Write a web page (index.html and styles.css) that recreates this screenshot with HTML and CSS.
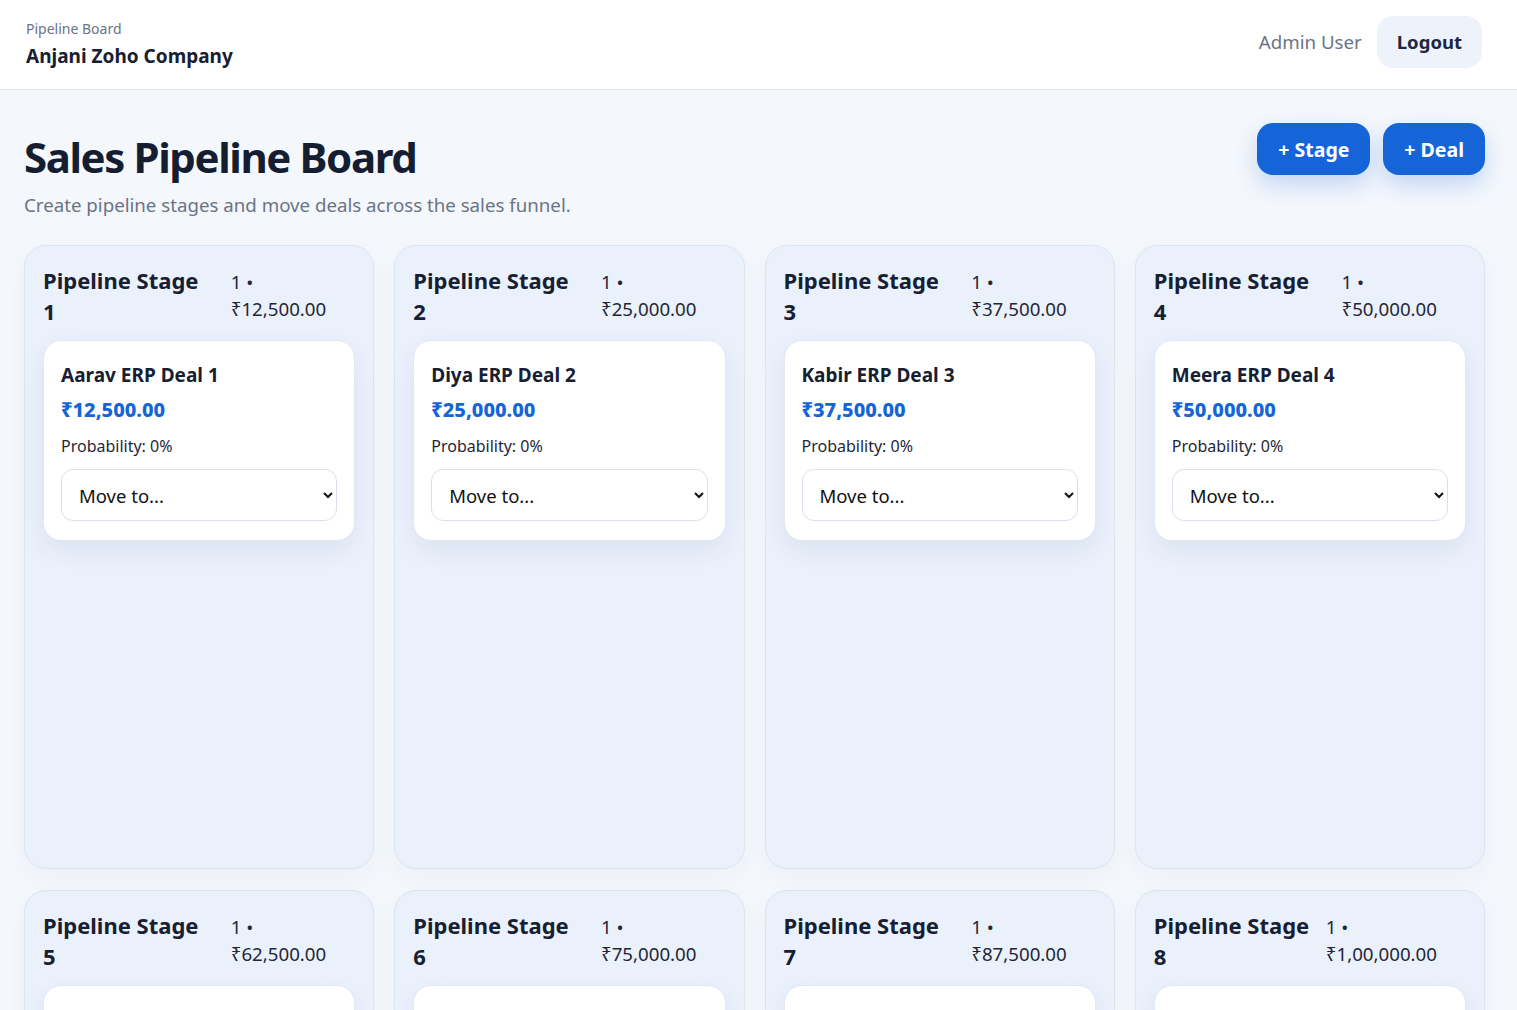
FILE: index.html
```html
<!DOCTYPE html>
<html lang="en">
<head>
    <title>Sales Pipeline Board</title>
    <link rel="stylesheet" href="styles.css">
</head>
<body>
    <!-- Top bar with company and user -->
    <header class="topbar">
        <div class="brand">
            <div class="brand-label">Pipeline Board</div>
            <div class="brand-name">Anjani Zoho Company</div>
        </div>
        <div class="user-area">
            <span class="user-name">Admin User</span>
            <button class="logout-button">Logout</button>
        </div>
    </header>

    <main class="page">
        <!-- Page heading and actions -->
        <div class="page-head">
            <div class="page-title">
                <h1>Sales Pipeline Board</h1>
                <p>Create pipeline stages and move deals across the sales funnel.</p>
            </div>
            <div class="actions">
                <button class="primary-button">+ Stage</button>
                <button class="primary-button">+ Deal</button>
            </div>
        </div>

        <!-- Stage columns -->
        <div class="board">
            <section class="stage">
                <div class="stage-head">
                    <h2>Pipeline Stage 1</h2>
                    <div class="stage-meta">1 • ₹12,500.00</div>
                </div>
                <div class="deal">
                    <h3>Aarav ERP Deal 1</h3>
                    <div class="deal-amount">₹12,500.00</div>
                    <div class="deal-prob">Probability: 0%</div>
                    <select class="move-select"><option>Move to...</option></select>
                </div>
            </section>
            <section class="stage">
                <div class="stage-head">
                    <h2>Pipeline Stage 2</h2>
                    <div class="stage-meta">1 • ₹25,000.00</div>
                </div>
                <div class="deal">
                    <h3>Diya ERP Deal 2</h3>
                    <div class="deal-amount">₹25,000.00</div>
                    <div class="deal-prob">Probability: 0%</div>
                    <select class="move-select"><option>Move to...</option></select>
                </div>
            </section>
            <section class="stage">
                <div class="stage-head">
                    <h2>Pipeline Stage 3</h2>
                    <div class="stage-meta">1 • ₹37,500.00</div>
                </div>
                <div class="deal">
                    <h3>Kabir ERP Deal 3</h3>
                    <div class="deal-amount">₹37,500.00</div>
                    <div class="deal-prob">Probability: 0%</div>
                    <select class="move-select"><option>Move to...</option></select>
                </div>
            </section>
            <section class="stage">
                <div class="stage-head">
                    <h2>Pipeline Stage 4</h2>
                    <div class="stage-meta">1 • ₹50,000.00</div>
                </div>
                <div class="deal">
                    <h3>Meera ERP Deal 4</h3>
                    <div class="deal-amount">₹50,000.00</div>
                    <div class="deal-prob">Probability: 0%</div>
                    <select class="move-select"><option>Move to...</option></select>
                </div>
            </section>
            <section class="stage">
                <div class="stage-head">
                    <h2>Pipeline Stage 5</h2>
                    <div class="stage-meta">1 • ₹62,500.00</div>
                </div>
                <div class="deal">
                    <h3>Rohan ERP Deal 5</h3>
                    <div class="deal-amount">₹62,500.00</div>
                    <div class="deal-prob">Probability: 0%</div>
                    <select class="move-select"><option>Move to...</option></select>
                </div>
            </section>
            <section class="stage">
                <div class="stage-head">
                    <h2>Pipeline Stage 6</h2>
                    <div class="stage-meta">1 • ₹75,000.00</div>
                </div>
                <div class="deal">
                    <h3>Sanya ERP Deal 6</h3>
                    <div class="deal-amount">₹75,000.00</div>
                    <div class="deal-prob">Probability: 0%</div>
                    <select class="move-select"><option>Move to...</option></select>
                </div>
            </section>
            <section class="stage">
                <div class="stage-head">
                    <h2>Pipeline Stage 7</h2>
                    <div class="stage-meta">1 • ₹87,500.00</div>
                </div>
                <div class="deal">
                    <h3>Vivaan ERP Deal 7</h3>
                    <div class="deal-amount">₹87,500.00</div>
                    <div class="deal-prob">Probability: 0%</div>
                    <select class="move-select"><option>Move to...</option></select>
                </div>
            </section>
            <section class="stage">
                <div class="stage-head">
                    <h2>Pipeline Stage 8</h2>
                    <div class="stage-meta">1 • ₹1,00,000.00</div>
                </div>
                <div class="deal">
                    <h3>Anaya ERP Deal 8</h3>
                    <div class="deal-amount">₹1,00,000.00</div>
                    <div class="deal-prob">Probability: 0%</div>
                    <select class="move-select"><option>Move to...</option></select>
                </div>
            </section>
        </div>
    </main>
</body>
</html>
```

FILE: styles.css
```css
/* Base */
body {
    margin: 0;
    font-family: "Noto Sans", "Open Sans", sans-serif;
    background: #f4f7fc;
    color: #172033;
}

button {
    font-family: inherit;
    border: none;
    cursor: pointer;
}

/* Top bar */
.topbar {
    background: #fff;
    border-bottom: 1px solid #dfe5ee;
    height: 90px;
    box-sizing: border-box;
    padding: 0 35px 6px 26px;
    display: flex;
    justify-content: space-between;
    align-items: center;
}

.brand {
    padding-top: 5px;
}

.brand-label {
    font-size: 14px;
    line-height: 20px;
    color: #6b7385;
    margin-bottom: 4px;
}

.brand-name {
    font-size: 19px;
    line-height: 26px;
    font-weight: 700;
    color: #172033;
}

.user-area {
    display: flex;
    align-items: center;
    gap: 15px;
}

.user-name {
    font-size: 18.7px;
    color: #6b7385;
}

.logout-button {
    background: #eef2fa;
    color: #1c2740;
    font-size: 18.5px;
    font-weight: 700;
    height: 52px;
    padding: 0 20px;
    border-radius: 16px;
}

/* Page content */
.page {
    padding: 33px 32px 24px 24px;
}

.page-head {
    display: flex;
    justify-content: space-between;
    align-items: flex-start;
}

.page-title {
    padding-top: 6px;
}

.page-title h1 {
    margin: 0;
    font-size: 42px;
    line-height: 55px;
    font-weight: 700;
    letter-spacing: -1.4px;
    color: #151e30;
}

.page-title p {
    margin: 8px 0 0;
    font-size: 18.7px;
    line-height: 26px;
    color: #6b7385;
}

.actions {
    display: flex;
    gap: 13px;
}

.primary-button {
    background: #1565d8;
    color: #fff;
    font-size: 19.5px;
    font-weight: 700;
    height: 52px;
    padding: 0 21px;
    border-radius: 16px;
    box-shadow: 0 10px 22px rgba(21, 101, 216, 0.22);
}

/* Board grid */
.board {
    margin-top: 27px;
    display: grid;
    grid-template-columns: repeat(4, 1fr);
    gap: 21px 20px;
}

.stage {
    min-height: 624px;
    box-sizing: border-box;
    background: #ebf1fb;
    border: 1px solid #dce4f0;
    border-radius: 22px;
    padding: 19px 18px 18px;
    box-shadow: 0 8px 24px rgba(40, 70, 120, 0.04);
}

.stage-head {
    display: flex;
    justify-content: space-between;
    align-items: flex-start;
    gap: 16px;
    padding-right: 29px;
    margin-bottom: 13px;
}

.stage-head h2 {
    margin: 0;
    font-size: 22px;
    line-height: 31px;
    font-weight: 700;
    color: #172033;
    max-width: 165px;
}

.stage-meta {
    width: min-content;
    padding-top: 3px;
    font-size: 18.7px;
    line-height: 27px;
    color: #1f2737;
}

/* Deal card */
.deal {
    background: #fff;
    border: 1px solid #e1e8f2;
    border-radius: 18px;
    padding: 20px 17px 19px;
    box-shadow: 0 10px 24px rgba(30, 60, 120, 0.07);
}

.deal h3 {
    margin: 0;
    font-size: 19px;
    line-height: 28px;
    font-weight: 700;
    color: #172033;
}

.deal-amount {
    margin-top: 7px;
    font-size: 20px;
    line-height: 28px;
    font-weight: 800;
    color: #1565d8;
}

.deal-prob {
    margin-top: 11px;
    font-size: 16px;
    line-height: 22px;
    color: #1f2737;
}

.move-select {
    margin-top: 12px;
    width: 100%;
    height: 52px;
    padding: 0 8px 0 13px;
    font-family: inherit;
    font-size: 18.5px;
    color: #111;
    background: #fff;
    border: 1px solid #d8e0ec;
    border-radius: 12px;
}
```
